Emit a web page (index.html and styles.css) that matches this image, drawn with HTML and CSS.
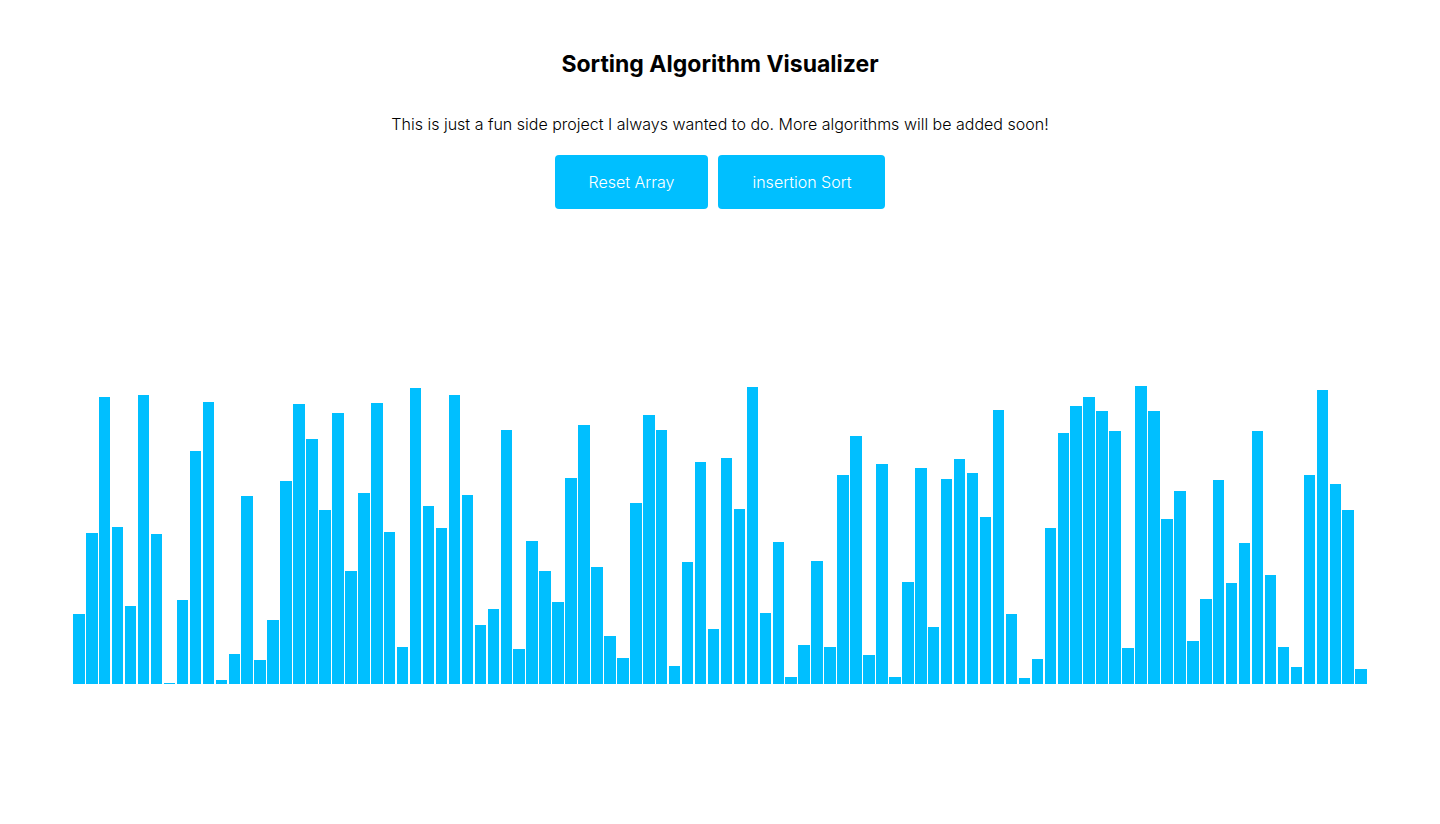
FILE: index.html
```html
<!DOCTYPE html>
<html lang="en">
<head>
<meta charset="utf-8">
<meta name="viewport" content="width=device-width, initial-scale=1">
<title>Sorting Algorithm Visualizer</title>
<link rel="stylesheet" href="styles.css">
</head>
<body>
<main class="page">
  <h1 class="title">Sorting Algorithm Visualizer</h1>
  <p class="intro">This is just a fun side project I always wanted to do. More algorithms will be added soon!</p>
  <div class="controls">
    <button class="button" type="button">Reset Array</button>
    <button class="button" type="button">insertion Sort</button>
  </div>
  <div class="chart" id="chart" role="img" aria-label="Array values"></div>
</main>
<script src="app.js"></script>
</body>
</html>
```
FILE: styles.css
```css
body {
  margin: 0;
  background: #fff;
  color: #000;
  font-family: Inter, "Liberation Sans", sans-serif;
  font-size: 16px;
  font-weight: 300;
  line-height: 20px;
}

.page {
  display: flex;
  flex-direction: column;
  align-items: center;
  padding: 49px 0 140px;
}

.title {
  margin: 0 0 35px;
  font-size: 23px;
  line-height: 30px;
  font-weight: 700;
  text-align: center;
}

.intro {
  margin: 0 0 21px;
  text-align: center;
}

.controls {
  display: flex;
  flex-wrap: wrap;
  justify-content: center;
  gap: 10px;
}

.button {
  padding: 17px 34px;
  border: 0;
  border-radius: 4px;
  background: #00bfff;
  color: #fff;
  font: inherit;
  cursor: pointer;
}

.chart {
  display: flex;
  align-items: flex-end;
  justify-content: center;
  align-self: stretch;
  min-height: 300px;
  margin-top: 175px;
}

.bar {
  width: 0.8vw;
  margin: 0 0.05vw;
  background: #00bfff;
}
```
FILE: app.js
```js
const values = [
  70, 151, 287, 157, 78, 289, 150, 1, 84, 233, 282, 4, 30, 188, 24, 64, 203, 280, 245, 174,
  271, 113, 191, 281, 152, 37, 296, 178, 156, 289, 189, 59, 75, 254, 35, 143, 113, 82, 206, 259,
  117, 48, 26, 181, 269, 254, 18, 122, 222, 55, 226, 175, 297, 71, 142, 7, 39, 123, 37, 209,
  248, 29, 220, 7, 102, 216, 57, 205, 225, 211, 167, 274, 70, 6, 25, 156, 251, 278, 287, 273,
  253, 36, 298, 273, 165, 193, 43, 85, 204, 101, 141, 253, 109, 37, 17, 209, 294, 200, 174, 15
];

const chart = document.getElementById("chart");

for (const value of values) {
  const bar = document.createElement("div");
  bar.className = "bar";
  bar.style.height = `${value}px`;
  chart.append(bar);
}
```
